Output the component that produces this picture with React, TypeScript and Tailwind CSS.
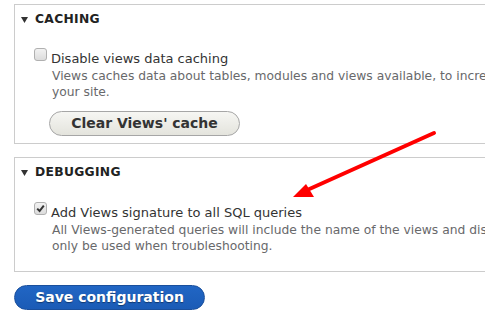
import React from "react"

const font = { fontFamily: '"DejaVu Sans", "Liberation Sans", sans-serif' }

const Triangle = () => (
  <svg width="7" height="6" viewBox="0 0 7 6" className="mr-[7px]">
    <path d="M0 0 L7 0 L3.5 6 Z" fill="#333" />
  </svg>
)

const Checkbox = ({ checked }: { checked?: boolean }) => (
  <span className="mt-[-1px] mr-[4px] flex h-[13px] w-[13px] shrink-0 items-center justify-center rounded-[3px] border border-[#b0b0b0] bg-gradient-to-b from-[#f2f2f2] to-[#dcdcdc]">
    {checked && (
      <svg width="9" height="9" viewBox="0 0 9 9">
        <path d="M1.2 4.6 L3.6 7 L7.8 1.6" fill="none" stroke="#333" strokeWidth="2" />
      </svg>
    )}
  </span>
)

const Fieldset = ({ title, children, className }: { title: string; children: React.ReactNode; className?: string }) => (
  <div className={`w-[600px] border border-r-0 border-[#cccccc] ${className ?? ""}`}>
    <div className="flex h-[29px] items-center pl-[6px] text-[12.3px] font-bold tracking-[0.3px] text-[#222]">
      <Triangle />
      {title}
    </div>
    {children}
  </div>
)

const CheckItem = ({ label, desc, checked }: { label: string; desc: string[]; checked?: boolean }) => (
  <div className="pl-[19px]">
    <div className="flex items-start text-[13px] leading-[18px] text-[#333]">
      <Checkbox checked={checked} />
      <span className="mt-[1px]">{label}</span>
    </div>
    <div className="pl-[18px] text-[12.3px] leading-[16px] text-[#68696b]">
      {desc.map((d) => (
        <div key={d} className="whitespace-nowrap">
          {d}
        </div>
      ))}
    </div>
  </div>
)

export default function App() {
  return (
    <div className="relative h-[333px] w-[485px] overflow-hidden bg-white" style={font}>
      <div className="pl-[14px] pt-[4px]">
        <Fieldset title="CACHING" className="pb-[7px]">
          <div className="pt-[15px]">
            <CheckItem
              label="Disable views data caching"
              desc={[
                "Views caches data about tables, modules and views available, to increase performance. By checking this box, Views will skip this cache and always rebuild this data when needed. This can have a serious performance impact on",
                "your site.",
              ]}
            />
            <div className="pl-[34px] pt-[11px]">
              <button className="h-[25px] w-[191px] rounded-full border border-[#a6a6a6] bg-gradient-to-b from-[#f6f6f3] to-[#e4e4dd] text-[14px] font-bold text-[#333]">
                Clear Views' cache
              </button>
            </div>
          </div>
        </Fieldset>

        <Fieldset title="DEBUGGING" className="mt-[13px] pb-[17px]">
          <div className="pt-[16px]">
            <CheckItem
              checked
              label="Add Views signature to all SQL queries"
              desc={[
                "All Views-generated queries will include the name of the views and display 'view-name:display-name' as a string at the end of the SELECT clause. This makes identifying Views queries in database server logs simpler, but should",
                "only be used when troubleshooting.",
              ]}
            />
          </div>
        </Fieldset>

        <button className="mt-[13px] h-[25px] w-[191px] rounded-full border border-[#1a4f9c] bg-gradient-to-b from-[#2166c4] to-[#1b5bb6] text-[14px] font-bold text-white [text-shadow:0_1px_1px_rgba(0,0,0,0.4)]">
          Save configuration
        </button>
      </div>

      <svg className="pointer-events-none absolute left-0 top-0" width="485" height="333" viewBox="0 0 485 333">
        <line x1="434" y1="133" x2="305" y2="191" stroke="#ff0000" strokeWidth="4" strokeLinecap="round" />
        <path d="M293 197 L306 184 L314 197 Z" fill="#ff0000" />
      </svg>
    </div>
  )
}
